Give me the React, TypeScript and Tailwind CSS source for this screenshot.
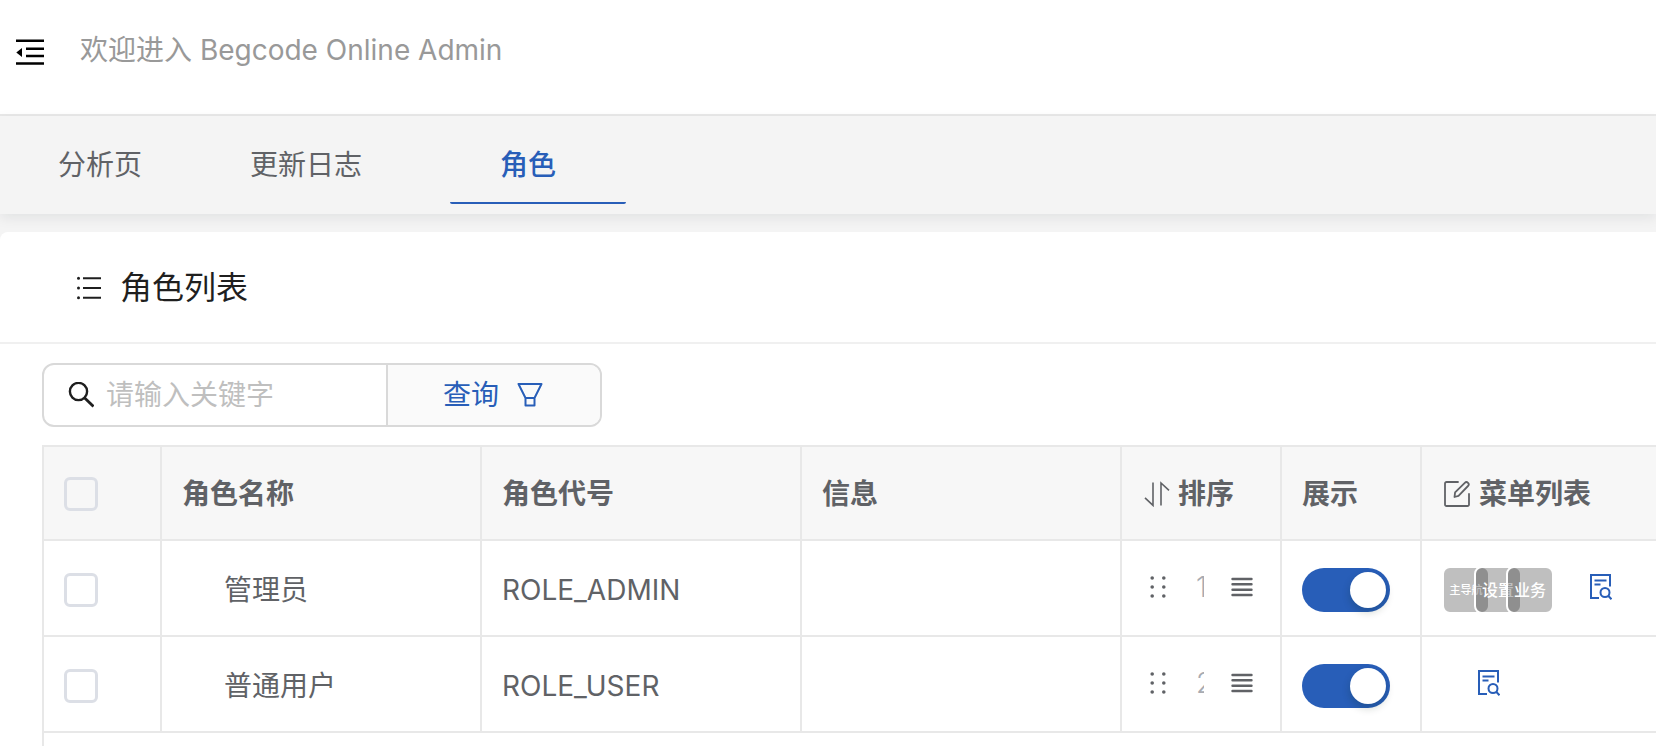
import { useState } from "react";

type Role = { id: number; name: string; code: string; order: number; menus: string[] };

const roles: Role[] = [
  { id: 1, name: "管理员", code: "ROLE_ADMIN", order: 1, menus: ["主导航", "设置", "业务"] },
  { id: 2, name: "普通用户", code: "ROLE_USER", order: 2, menus: [] },
];

function FoldIcon() {
  return (
    <svg width="30" height="28" viewBox="0 0 30 28" fill="currentColor" aria-hidden="true">
      <path d="M1 1.5h28v2.5H1zM11 9.5h18v2.5H11zM11 16.8h18v2.5H11zM1 24.3h28v2.5H1zM7 10v9L1.3 14.5z" />
    </svg>
  );
}

function ListIcon() {
  return (
    <svg width="26" height="26" viewBox="0 0 26 26" fill="currentColor" aria-hidden="true">
      <path d="M7 2.2h18v2H7zM7 12h18v2H7zM7 21.8h18v2H7z" />
      <circle cx="2.5" cy="3.2" r="1.5" />
      <circle cx="2.5" cy="13" r="1.5" />
      <circle cx="2.5" cy="22.8" r="1.5" />
    </svg>
  );
}

function SearchIcon() {
  return (
    <svg width="26" height="26" viewBox="0 0 26 26" fill="none" stroke="currentColor" strokeWidth="2.4" aria-hidden="true">
      <circle cx="10.500" cy="9.500" r="8.6" />
      <path d="M16.7 15.900L25.500 24.500" strokeWidth="2.8" />
    </svg>
  );
}

function FunnelIcon() {
  return (
    <svg width="26" height="26" viewBox="0 0 26 26" fill="none" stroke="currentColor" strokeWidth="2" strokeLinejoin="round" aria-hidden="true">
      <path d="M1.5 2h23l-7 14v7.5h-9V16zM8.5 16h9" />
    </svg>
  );
}

function SortIcon() {
  return (
    <svg width="26" height="26" viewBox="0 0 26 26" fill="none" stroke="currentColor" strokeWidth="1.6" aria-hidden="true">
      <path d="M1 16.800l8 7.600V1.500M17 24.500V2l8 7.400" />
    </svg>
  );
}

function EditIcon() {
  return (
    <svg width="26" height="26" viewBox="0 0 26 26" fill="none" stroke="currentColor" strokeWidth="1.8" strokeLinecap="round" strokeLinejoin="round" aria-hidden="true">
      <path d="M14 1H2.500A1.500 1.500 0 0 0 1 2.500v21A1.500 1.500 0 0 0 2.500 25h21a1.500 1.500 0 0 0 1.500-1.500V13" />
      <path d="M10.500 16l.6-4.600 9.700-9.600a2.200 2.200 0 0 1 3.200 3.200l-9.500 9.900z" />
    </svg>
  );
}

function DragIcon() {
  return (
    <svg width="16" height="24" viewBox="0 0 16 24" fill="currentColor" aria-hidden="true">
      {[3, 12, 21].map((y) => (
        <g key={y}>
          <circle cx="2.200" cy={y} r="1.800" />
          <circle cx="13.800" cy={y} r="1.800" />
        </g>
      ))}
    </svg>
  );
}

function BarsIcon() {
  return (
    <svg width="22" height="20" viewBox="0 0 22 20" stroke="currentColor" strokeWidth="2.400" strokeLinecap="round" aria-hidden="true">
      <path d="M1.500 2h19M1.500 7.300h19M1.500 12.700h19M1.500 18h19" />
    </svg>
  );
}

function DetailIcon() {
  return (
    <svg width="22" height="26" viewBox="0 0 22 26" fill="none" stroke="currentColor" strokeWidth="2" aria-hidden="true">
      <path d="M9 24H1V1h19v11.500M4.500 6.500h12M4.500 10.500h6" />
      <circle cx="15" cy="18.500" r="4.500" />
      <path d="M18.200 21.800l3.300 3.400" />
    </svg>
  );
}

const check =
  "block size-[34px] appearance-none rounded-[6px] border-3 border-[#dcdfe6] bg-transparent checked:border-[#285eb8] checked:bg-[#285eb8]";
const line = "border-b-2 border-r-2 border-[#e8e8e8] px-5 text-left";
const head = `${line} pt-0.5`;
const cell = `${line} pt-1`;

function Toggle({ label }: { label: string }) {
  return (
    <input
      type="checkbox"
      role="switch"
      defaultChecked
      aria-label={label}
      className="block h-11 w-22 appearance-none rounded-full bg-[#bfbfbf] p-1 before:block before:size-9 before:rounded-full before:bg-white before:shadow-[0_4px_8px_rgba(0,35,11,0.2)] checked:bg-[#285eb8] checked:before:ml-11"
    />
  );
}

export default function App() {
  const [tab, setTab] = useState("角色");
  const tabs = [
    { name: "分析页", space: "pl-[50px] pr-10" },
    { name: "更新日志", space: "pl-[50px] pr-[70px]" },
    { name: "角色", space: "pl-[50px] pr-[70px]" },
  ];

  return (
    <div className="min-h-screen overflow-hidden bg-[#f4f4f4] font-[Inter,'Noto_Sans_CJK_SC',sans-serif] text-[28px] leading-10 text-[#606266]">
      <header className="flex h-[116px] items-start gap-[35px] border-b-2 border-[#e8e8e8] bg-white pl-[15px] pt-[30px]">
        <button type="button" aria-label="折叠菜单" className="mt-2 text-black">
          <FoldIcon />
        </button>
        <span className="text-[#999]">欢迎进入 Begcode Online Admin</span>
      </header>

      <nav className="relative flex h-[98px] items-start gap-[18px] pl-2 shadow-[0_4px_12px_rgba(0,21,41,0.08)]">
        {tabs.map((t) => (
          <button
            key={t.name}
            type="button"
            onClick={() => setTab(t.name)}
            className={`h-[88px] border-b-2 pt-3 ${t.space} ${
              tab === t.name ? "rounded-[2px] border-[#285eb8] font-medium text-[#285eb8]" : "border-transparent"
            }`}
          >
            {t.name}
          </button>
        ))}
      </nav>

      <main className="relative mt-[18px] min-h-[calc(100vh-232px)] rounded-tl-[8px] bg-white">
        <h1 className="flex h-28 items-center gap-[18px] border-b-2 border-[#f0f0f0] pl-[76px] pt-0.5 text-[32px] text-[#1f1f1f]">
          <ListIcon />
          角色列表
        </h1>

        <div className="pl-[42px] pt-[19px]">
          <div className="flex h-16 w-[560px] overflow-hidden rounded-[12px] border-2 border-[#d9d9d9]">
            <label className="flex min-w-0 flex-1 items-center gap-3 pl-6 text-[#1f1f1f]">
              <SearchIcon />
              <input
                type="text"
                aria-label="关键字"
                placeholder="请输入关键字"
                className="min-w-0 flex-1 bg-transparent outline-none placeholder:text-[#bfbfbf]"
              />
            </label>
            <button
              type="button"
              className="flex w-[214px] items-center justify-center gap-[18px] border-l-2 border-[#d9d9d9] bg-[#fafafa] pr-0.5 text-[#285eb8]"
            >
              查询
              <FunnelIcon />
            </button>
          </div>

          <div className="mt-[18px] overflow-hidden border-l-2 border-t-2 border-[#e8e8e8]">
            <table className="w-full table-fixed border-separate border-spacing-0">
              <colgroup>
                <col className="w-[118px]" />
                <col className="w-80" />
                <col className="w-80" />
                <col className="w-80" />
                <col className="w-40" />
                <col className="w-35" />
                <col />
              </colgroup>
              <thead className="bg-[#f7f7f7]">
                <tr className="h-[94px]">
                  <th className={head}>
                    <input type="checkbox" aria-label="全选" className={check} />
                  </th>
                  <th className={head}>角色名称</th>
                  <th className={head}>角色代号</th>
                  <th className={head}>信息</th>
                  <th className={head}>
                    <span className="flex items-center gap-2 pl-[2px]">
                      <SortIcon />
                      排序
                    </span>
                  </th>
                  <th className={head}>展示</th>
                  <th className="border-b-2 border-[#e8e8e8] pl-[22px] pt-0.5 text-left">
                    <span className="flex items-center gap-[9px]">
                      <EditIcon />
                      菜单列表
                    </span>
                  </th>
                </tr>
              </thead>
              <tbody>
                {roles.map((r) => (
                  <tr key={r.id} className="h-24">
                    <td className={cell}>
                      <input type="checkbox" aria-label={r.name} className={check} />
                    </td>
                    <td className={cell}>
                      <span className="pl-[42px]">{r.name}</span>
                    </td>
                    <td className={cell}>{r.code}</td>
                    <td className={cell} />
                    <td className={cell}>
                      <span className="flex items-center pb-1.5 pl-2">
                        <DragIcon />
                        <input
                          type="text"
                          aria-label={`${r.name}排序`}
                          defaultValue={r.order}
                          className="ml-[30px] mr-[27px] w-2 bg-transparent font-light text-[#a8abb2] outline-none"
                        />
                        <BarsIcon />
                      </span>
                    </td>
                    <td className={cell}>
                      <Toggle label={`${r.name}展示`} />
                    </td>
                    <td className="border-b-2 border-[#e8e8e8] pl-5 pt-1">
                      <span className="flex items-center">
                        {r.menus.map((m, i) => (
                          <span
                            key={m}
                            className={`flex size-12 shrink-0 items-center justify-center whitespace-nowrap rounded-[8px] border-2 border-white bg-black/25 font-medium text-white ${
                              i > 0 ? "-ml-4" : ""
                            } ${m.length > 2 ? "text-[11px]" : "text-[16px]"}`}
                          >
                            {m}
                          </span>
                        ))}
                        <button type="button" aria-label={`${r.name}菜单详情`} className="ml-9 pb-1.5 text-[#285eb8]">
                          <DetailIcon />
                        </button>
                      </span>
                    </td>
                  </tr>
                ))}
              </tbody>
            </table>
            <div className="h-10" />
          </div>
        </div>
      </main>
    </div>
  );
}
